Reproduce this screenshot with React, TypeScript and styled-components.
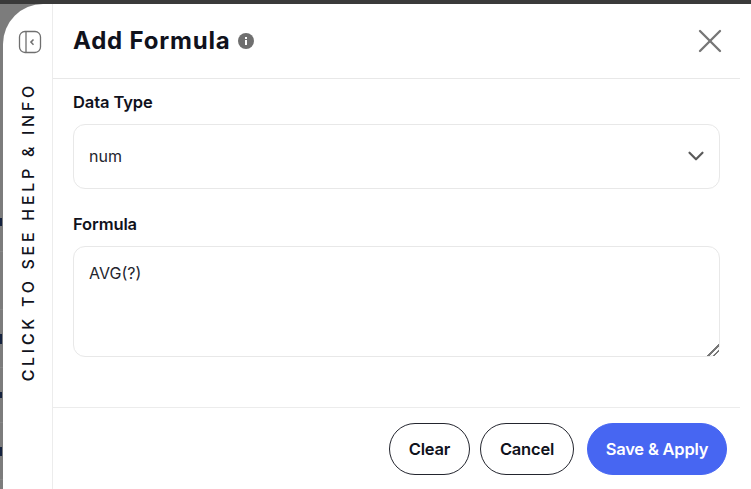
import React from 'react';
import styled, { createGlobalStyle } from 'styled-components';
import { X, ChevronDown } from 'lucide-react';

const GlobalStyle = createGlobalStyle`
    html, body {
        margin: 0;
        padding: 0;
        height: 100%;
        overflow: hidden;
    }

    #root {
        height: 100%;
    }
`;

const Backdrop = styled.div`
    display: flex;
    flex-direction: column;
    height: 489px;
    background: #7c7c7c;
    font-family: Inter, "Liberation Sans", sans-serif;
    color: #10121c;
`;

const TopBar = styled.div`
    height: 4px;
    flex: none;
    background: #3a3a3a;
`;

const Stage = styled.div`
    display: flex;
    flex: 1;
    min-height: 0;
`;

// the table behind the drawer, only its first pixels stay visible
const PageBehind = styled.div`
    display: flex;
    flex-direction: column;
    flex: none;
    width: 3px;
    padding-top: 188px;
    box-sizing: border-box;
    overflow: hidden;
`;

const BehindRow = styled.div<{ $height: number }>`
    display: flex;
    align-items: center;
    flex: none;
    height: ${(p) => p.$height}px;
    box-sizing: border-box;
    border-bottom: 1px solid #868686;
`;

const BehindMark = styled.span<{ $height: number }>`
    display: block;
    width: 2px;
    height: ${(p) => p.$height}px;
    background: #16233f;
`;

const Drawer = styled.div`
    display: flex;
    flex: 1;
    min-width: 0;
    background: #fff;
    border-top-left-radius: 40px;
`;

const HelpRail = styled.div`
    display: flex;
    flex-direction: column;
    align-items: center;
    flex: none;
    width: 50px;
    padding: 26px 0 0 0;
    box-sizing: border-box;
    border-right: 1px solid #ececec;
`;

const PanelButton = styled.div`
    display: flex;
    margin-left: 5px;
`;

const HelpText = styled.span`
    margin-top: 28px;
    margin-left: 2px;
    writing-mode: vertical-rl;
    transform: rotate(180deg);
    font-size: 16px;
    font-weight: 500;
    line-height: 19px;
    letter-spacing: 3.7px;
    white-space: nowrap;
    color: #10121c;
`;

const Main = styled.div`
    display: flex;
    flex: 1;
    flex-direction: column;
    min-width: 0;
    margin-right: 11px;
`;

const Header = styled.div`
    display: flex;
    align-items: center;
    flex: none;
    height: 75px;
    padding: 0 10px 0 20px;
    box-sizing: border-box;
    border-bottom: 1px solid #e8e8e8;
`;

const Title = styled.h2`
    margin: 0;
    font-size: 24px;
    font-weight: 700;
    line-height: 30px;
    letter-spacing: 0.8px;
`;

const CloseButton = styled.button`
    display: flex;
    margin-left: auto;
    padding: 0;
    border: 0;
    background: none;
    color: #767676;
`;

const Body = styled.div`
    display: flex;
    flex: 1;
    flex-direction: column;
    padding: 13px 20px 0;
`;

const Label = styled.label`
    display: block;
    margin-bottom: 12px;
    font-size: 16.5px;
    font-weight: 600;
    line-height: 20px;
    letter-spacing: -0.1px;
`;

const SelectBox = styled.div`
    display: flex;
    align-items: center;
    justify-content: space-between;
    height: 65px;
    padding: 0 10px 2px 15px;
    margin-bottom: 25px;
    box-sizing: border-box;
    border: 1px solid #e8e8e8;
    border-radius: 12px;
    font-size: 16px;
    color: #23252e;
`;

const FormulaInput = styled.textarea`
    display: block;
    width: 100%;
    height: 111px;
    padding: 16px 15px;
    box-sizing: border-box;
    border: 1px solid #e8e8e8;
    border-radius: 12px;
    outline: none;
    font-family: inherit;
    font-size: 16px;
    line-height: 20px;
    color: #23252e;

    &::-webkit-resizer {
        background: linear-gradient(
            135deg,
            transparent 0 60%,
            #777 60% 67%,
            transparent 67% 78%,
            #777 78% 85%,
            transparent 85%
        );
    }
`;

const Footer = styled.div`
    display: flex;
    justify-content: flex-end;
    flex: none;
    gap: 10px;
    height: 82px;
    padding: 15px 13px 0 0;
    box-sizing: border-box;
    border-top: 1px solid #ececec;
`;

const PillButton = styled.button<{ $primary?: boolean; $width: number }>`
    width: ${(p) => p.$width}px;
    height: 52px;
    margin-left: ${(p) => (p.$primary ? '3px' : '0')};
    padding: 0;
    border: 1px solid ${(p) => (p.$primary ? '#4766f2' : '#23252e')};
    border-radius: 26px;
    background: ${(p) => (p.$primary ? '#4766f2' : '#fff')};
    color: ${(p) => (p.$primary ? '#fff' : '#10121c')};
    font-family: inherit;
    font-size: 16.5px;
    font-weight: 600;
    letter-spacing: -0.2px;
`;

const InfoIcon = styled.svg`
    flex: none;
    margin-left: 8px;
`;

const PanelIcon = () => (
    <svg width="24" height="24" viewBox="0 0 24 24" fill="none" stroke="#6f6f6f">
        <rect x="1.5" y="1.5" width="21" height="21" rx="5.5" strokeWidth="1.3" />
        <path d="M8 1.5v21" strokeWidth="1.3" />
        <path d="M15.5 9.5l-2.6 2.6 2.6 2.6" strokeWidth="1.5" />
    </svg>
);

const behindRows = [
    { height: 60, mark: 8 },
    { height: 58, mark: 0 },
    { height: 58, mark: 10 },
    { height: 55, mark: 6 },
    { height: 57, mark: 9 }
];

const App = () => {
    return (
        <Backdrop>
            <GlobalStyle />
            <TopBar />
            <Stage>
                <PageBehind>
                    {behindRows.map((row, i) => (
                        <BehindRow key={i} $height={row.height}>
                            <BehindMark $height={row.mark} />
                        </BehindRow>
                    ))}
                </PageBehind>
                <Drawer>
                    <HelpRail>
                        <PanelButton>
                            <PanelIcon />
                        </PanelButton>
                        <HelpText>CLICK TO SEE HELP &amp; INFO</HelpText>
                    </HelpRail>
                    <Main>
                        <Header>
                            <Title>Add Formula</Title>
                            <InfoIcon width="16" height="16" viewBox="0 0 16 16">
                                <circle cx="8" cy="8" r="8" fill="#6f6f6f" />
                                <rect x="7" y="7" width="2" height="5" fill="#fff" />
                                <rect x="7" y="4" width="2" height="2" fill="#fff" />
                            </InfoIcon>
                            <CloseButton>
                                <X size={40} strokeWidth={1.4} />
                            </CloseButton>
                        </Header>
                        <Body>
                            <Label>Data Type</Label>
                            <SelectBox>
                                num
                                <ChevronDown size={26} strokeWidth={2} color="#5a5a5a" />
                            </SelectBox>
                            <Label>Formula</Label>
                            <FormulaInput readOnly defaultValue="AVG(?)" />
                        </Body>
                        <Footer>
                            <PillButton $width={81}>Clear</PillButton>
                            <PillButton $width={94}>Cancel</PillButton>
                            <PillButton $primary $width={140}>Save &amp; Apply</PillButton>
                        </Footer>
                    </Main>
                </Drawer>
            </Stage>
        </Backdrop>
    );
};

export default App;
